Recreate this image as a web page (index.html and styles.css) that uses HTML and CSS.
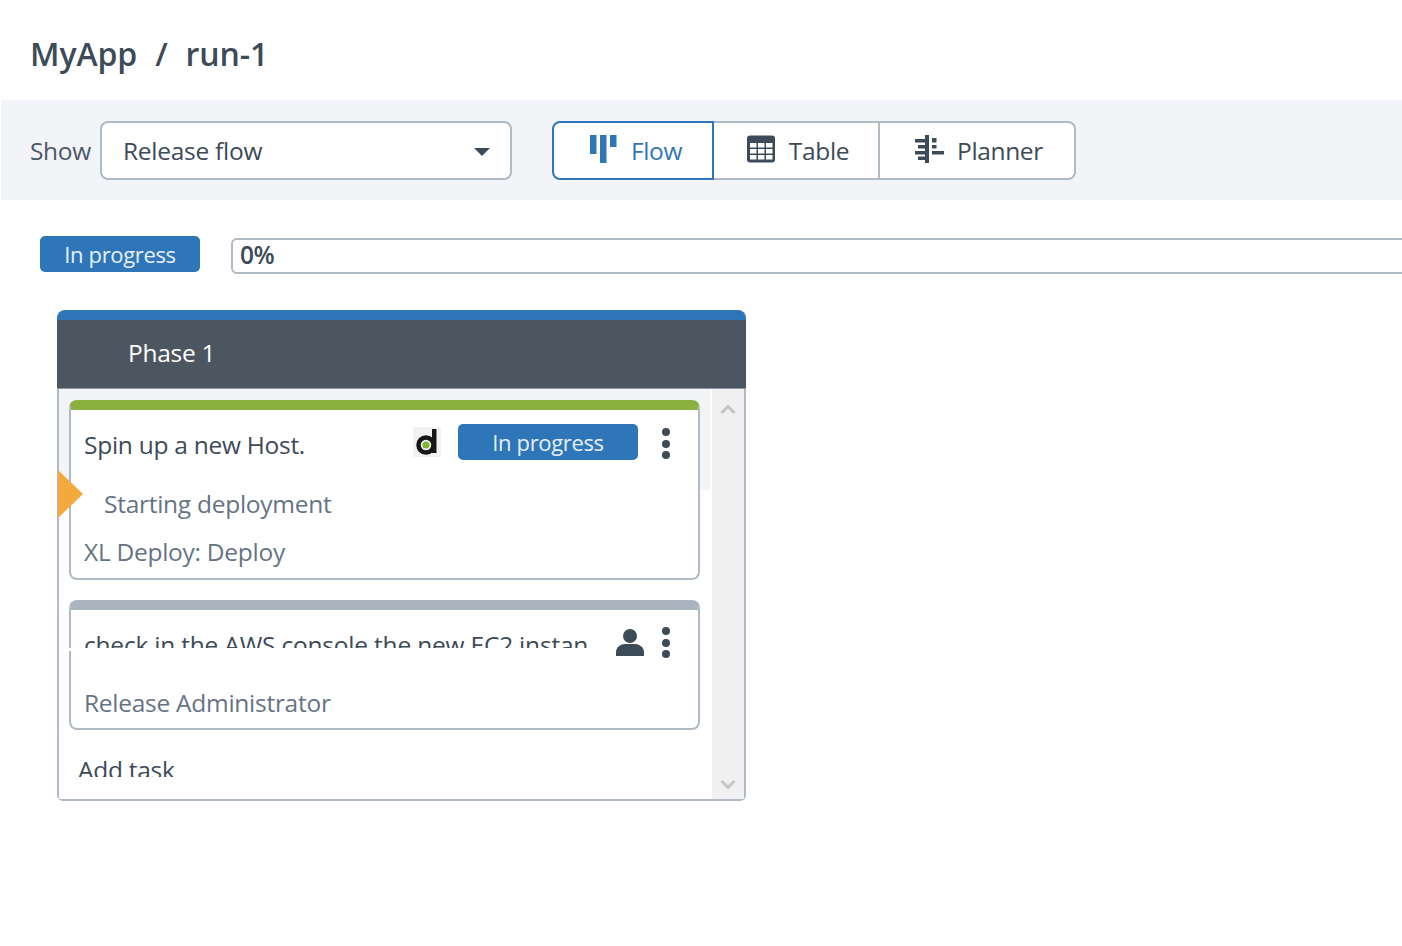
FILE: index.html
```html
<!DOCTYPE html>
<html lang="en">
<head>
<meta charset="utf-8">
<title>MyApp / run-1</title>
<link rel="stylesheet" href="styles.css">
</head>
<body>
<header class="page-title"><span>MyApp</span><span class="sep">/</span><span>run-1</span></header>
<div class="toolbar">
  <label class="show-label">Show</label>
  <div class="select"><span>Release flow</span><i class="caret"></i></div>
  <div class="views">
    <div class="view active view-flow">
      <svg class="icon" width="30" height="30" viewBox="0 0 30 30"><path fill="currentColor" d="M2 1h6.500v19H2zM12 1h6.500v28H12zM22 1h6.500v12H22z"/></svg>
      <span>Flow</span>
    </div>
    <div class="view view-table">
      <svg class="icon" width="30" height="30" viewBox="0 0 30 30"><rect x="1" y="1.500" width="28" height="27" rx="3" fill="#3d4a57"/><path fill="#fff" d="M4 9h6.500v4.500H4zM12 9h6.500v4.500H12zM20 9h6.500v4.500H20zM4 15h6.500v4.500H4zM12 15h6.500v4.500H12zM20 15h6.500v4.500H20zM4 21h6.500v4.500H4zM12 21h6.500v4.500H12zM20 21h6.500v4.500H20z"/></svg>
      <span>Table</span>
    </div>
    <div class="view view-planner">
      <svg class="icon" width="30" height="30" viewBox="0 0 30 30"><path fill="#3d4a57" d="M11 1h4v28h-4zM1 5h10v3.500H1zM4 11h7v3.500H4zM1 17h10v3.500H1zM4 22.500h7V26H4zM18 4h4.500v4.500H18zM18 11h4.500v3.500H18zM18 17h12v3.500H18z"/></svg>
      <span>Planner</span>
    </div>
  </div>
</div>
<div class="status-row">
  <span class="badge badge-main">In progress</span>
  <div class="progress">0%</div>
</div>
<section class="phase">
  <div class="phase-head">Phase 1</div>
  <div class="phase-body">
    <div class="tasks">
      <article class="task task-active">
        <i class="marker"></i>
        <div class="task-top">
          <div class="task-title">Spin up a new Host.</div>
          <svg class="d-logo" width="28" height="30" viewBox="0 0 28 30"><rect width="28" height="30" fill="#f2f2f2"/><circle cx="13" cy="18" r="7.500" fill="none" stroke="#161616" stroke-width="4.500"/><circle cx="13" cy="18" r="3.500" fill="#7db32e"/><rect x="19" y="2" width="4.500" height="24" fill="#161616"/></svg>
          <span class="badge badge-task">In progress</span>
          <div class="dots"><i></i><i></i><i></i></div>
        </div>
        <div class="task-comment">Starting deployment</div>
        <div class="task-meta">XL Deploy: Deploy</div>
      </article>
      <article class="task task-planned">
        <i class="notch"></i>
        <div class="task-top">
          <div class="task-title task-title-clipped"><span>check in the AWS console the new EC2 instan</span></div>
          <svg class="user" width="30" height="30" viewBox="0 0 30 30"><circle cx="15" cy="9" r="7" fill="#3d4a57"/><path fill="#3d4a57" d="M1 29v-4c0-5 5-8 9-8h10c4 0 9 3 9 8v4z"/></svg>
          <div class="dots"><i></i><i></i><i></i></div>
        </div>
        <div class="task-meta">Release Administrator</div>
      </article>
      <div class="add-task"><span>Add task</span></div>
    </div>
    <div class="scrollbar">
      <svg width="16" height="10" viewBox="0 0 16 10"><path d="M1.500 9L8 2.500 14.500 9" fill="none" stroke="#c4c4c4" stroke-width="3"/></svg>
      <svg width="16" height="10" viewBox="0 0 16 10"><path d="M1.500 1L8 7.500 14.500 1" fill="none" stroke="#c4c4c4" stroke-width="3"/></svg>
    </div>
  </div>
</section>
</body>
</html>
```
FILE: styles.css
```css
* { box-sizing: border-box; }
html, body { margin: 0; height: 946px; overflow: hidden; background: #fff; }
body { font-family: "Open Sans", "Liberation Sans", sans-serif; font-size: 24.500px; color: #3d4a57; letter-spacing: -0.27px; }

.page-title { height: 100px; padding: 33px 0 0 30px; font-size: 32px; font-weight: 600; line-height: 42px; display: flex; letter-spacing: -0.1px; }
.sep { margin: 0 18px; }

.toolbar { height: 100px; margin-left: 1px; background: #f3f4f8; display: flex; padding: 21px 0 0 29px; align-items: flex-start; }
.show-label { width: 70px; line-height: 59px; color: #4c5866; letter-spacing: -0.35px; }
.select { width: 412px; height: 59px; background: #fff; border: 2px solid #b0bac4; border-radius: 8px; display: flex; align-items: center; justify-content: space-between; padding: 0 20px 0 21px; }
.caret { width: 0; height: 0; border-left: 8px solid transparent; border-right: 8px solid transparent; border-top: 8px solid #3d4a57; margin-top: 3px; }

.views { display: flex; margin-left: 40px; height: 59px; }
.view { background: #fff; border: 2px solid #b0bac4; border-left: 0; display: flex; align-items: center; justify-content: center; gap: 13px; padding-left: 4px; letter-spacing: -0.35px; }
.view .icon { margin-top: -4px; }
.view-flow { width: 162px; border: 2px solid #2f76b8; border-radius: 8px 0 0 8px; color: #2f76b8; }
.view-table { width: 166px; border-right: 2px solid #b0bac4; padding-left: 3px; }
.view-planner { width: 196px; border-radius: 0 8px 8px 0; padding-left: 3px; }

.badge { background: #2f76b8; border-radius: 5px; display: flex; align-items: center; justify-content: center; font-size: 22px; height: 36px; padding-bottom: 1px; color: #e6f0f8; letter-spacing: -0.35px; }
.status-row { display: flex; align-items: flex-start; padding: 36px 0 0 40px; height: 110px; }
.badge-main { width: 160px; flex: none; }
.progress { margin: 2px -4px 0 31px; height: 36px; flex: 1; border: 2px solid #b0bac4; border-radius: 6px 0 0 6px; padding-left: 7px; line-height: 30px; font-weight: 600; letter-spacing: -0.4px; }

.phase { width: 689px; height: 491px; margin-left: 57px; border-top: 10px solid #2f76b8; border-radius: 8px 8px 6px 6px; display: flex; flex-direction: column; }
.phase-head { height: 69px; background: #4c5660; border-bottom: 1px solid #8b97a3; color: #fff; padding: 0 0 2px 71px; line-height: 66px; flex: none; }
.phase-body { flex: 1; min-height: 0; display: flex; border: 2px solid #b0bac4; border-top: 0; border-radius: 0 0 6px 6px; background: #fff; }
.tasks { width: 651px; flex: none; padding: 11px 0 0 10px; position: relative; background: linear-gradient(#f3f4f8 0, #f3f4f8 101px, #fff 101px); }
.scrollbar { flex: 1; margin-left: 2px; background: #f0f0f0; display: flex; flex-direction: column; justify-content: space-between; align-items: center; padding: 15px 1px 9px 0; }

.task { width: 631px; background: #fff; border: 2px solid #b0bac4; border-top-width: 10px; border-radius: 8px; position: relative; padding: 0 13px; }
.task-active { height: 180px; border-top-color: #8ab03f; margin-bottom: 20px; }
.task-planned { height: 130px; border-top-color: #abb5bf; margin-bottom: 21px; }
.task-top { display: flex; align-items: flex-start; position: relative; height: 59px; }
.task-title { flex: 1; line-height: 34px; padding-top: 18px; }
.task-title-clipped { height: 38px; padding-top: 18px; overflow: hidden; line-height: 34px; white-space: nowrap; letter-spacing: -0.2px; }
.task-planned .task-top { height: 0; }
.task-planned .task-title-clipped { flex: none; width: 503px; }
.task-comment { padding-left: 20px; line-height: 34px; color: #667385; margin-top: 18px; }
.task-meta { line-height: 34px; color: #667385; margin-top: 14px; }
.task-planned .task-meta { margin-top: 76px; }

.marker { position: absolute; left: -13px; top: 60px; width: 0; height: 0; border-left: 25px solid #f3a93c; border-top: 24px solid transparent; border-bottom: 24px solid transparent; }
.notch { position: absolute; left: -2px; top: 38px; width: 2px; height: 3px; background: #fff; }

.d-logo { position: absolute; left: 329px; top: 17px; }
.badge-task { position: absolute; left: 374px; top: 14px; width: 180px; }
.dots { position: absolute; left: 578px; top: 18px; width: 10px; display: flex; flex-direction: column; gap: 3.500px; }
.task-planned .dots { top: 17px; }
.dots i { width: 8px; height: 8px; border-radius: 50%; background: #3d4a57; }
.user { position: absolute; left: 531px; top: 17px; }

.add-task { height: 26px; overflow: hidden; padding-left: 9px; white-space: nowrap; line-height: 34px; }
.add-task span { display: block; margin-top: 2px; }
```
